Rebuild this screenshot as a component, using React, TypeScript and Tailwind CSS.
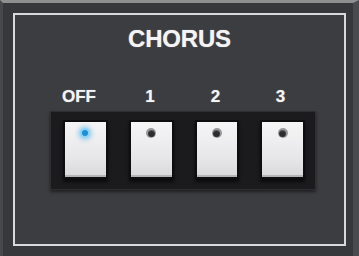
import React from "react";

const keys = [
  { label: "OFF", on: true, lpad: "pr-[13px]" },
  { label: "1", on: false, lpad: "pr-[3px]" },
  { label: "2", on: false, lpad: "pr-[4px]" },
  { label: "3", on: false, lpad: "pr-[6px]" },
];

function Led({ on }: { on: boolean }) {
  if (on) {
    return (
      <div className="w-[10px] h-[10px] rounded-full bg-[#8fd3f5] flex items-center justify-center shadow-[0_0_4px_2px_rgba(80,180,240,0.55)]">
        <div className="w-[6px] h-[6px] rounded-full bg-[#1e8fd6]" />
      </div>
    );
  }
  return (
    <div className="w-[10px] h-[10px] rounded-full bg-[#9a9a9c] flex items-center justify-center">
      <div className="w-[7px] h-[7px] rounded-full bg-[#2c2c2e] shadow-[inset_0_1px_1px_rgba(255,255,255,0.25)]" />
    </div>
  );
}

export default function App() {
  return (
    <div
      className="w-[359px] h-[256px] bg-[#37383b] border-t-[3px] border-t-[#8e8f91] border-l-[3px] border-l-[#48494c] border-r-[6px] border-r-[#4a4b4e] pt-[10px] pl-[10px] pr-[7px] pb-[10px]"
      style={{ fontFamily: '"Liberation Sans", Arial, sans-serif' }}
    >
      <div className="w-[333px] h-[233px] border-2 border-[#d9d9db] bg-[#3c3d40] flex flex-col">
        <div className="mt-[12px] flex justify-center">
          <span className="text-[24px] leading-[24px] font-bold text-[#f4f4f4] tracking-[-0.2px] [text-shadow:0_0_1px_rgba(255,255,255,0.6)]">
            CHORUS
          </span>
        </div>
        <div className="mt-[37px] ml-[35px] flex pl-[15px] gap-[25px]">
          {keys.map((k) => (
            <div key={k.label} className={`w-[41px] flex justify-center ${k.lpad}`}>
              <span className="text-[17px] leading-[17px] font-bold text-[#f4f4f4] whitespace-nowrap [text-shadow:0_0_1px_rgba(255,255,255,0.6)]">
                {k.label}
              </span>
            </div>
          ))}
        </div>
        <div className="mt-[6px] ml-[35px] w-[266px] h-[79px] bg-[#1b1b1d] border border-[#2e2e31] shadow-[0_2px_3px_rgba(0,0,0,0.5)] flex items-start pt-[10px] pl-[14px] pr-[12px] gap-[25px]">
          {keys.map((k) => (
            <div
              key={k.label}
              className="w-[41px] h-[55px] bg-[linear-gradient(#f6f5f6,#e6e6e8_70%,#dadadc)] border-b-[2px] border-b-[#b4b4b6] shadow-[0_0_0_2px_#0e0e10,0_3px_3px_2px_rgba(0,0,0,0.6)] flex justify-center pt-[6px]"
            >
              <Led on={k.on} />
            </div>
          ))}
        </div>
      </div>
    </div>
  );
}
